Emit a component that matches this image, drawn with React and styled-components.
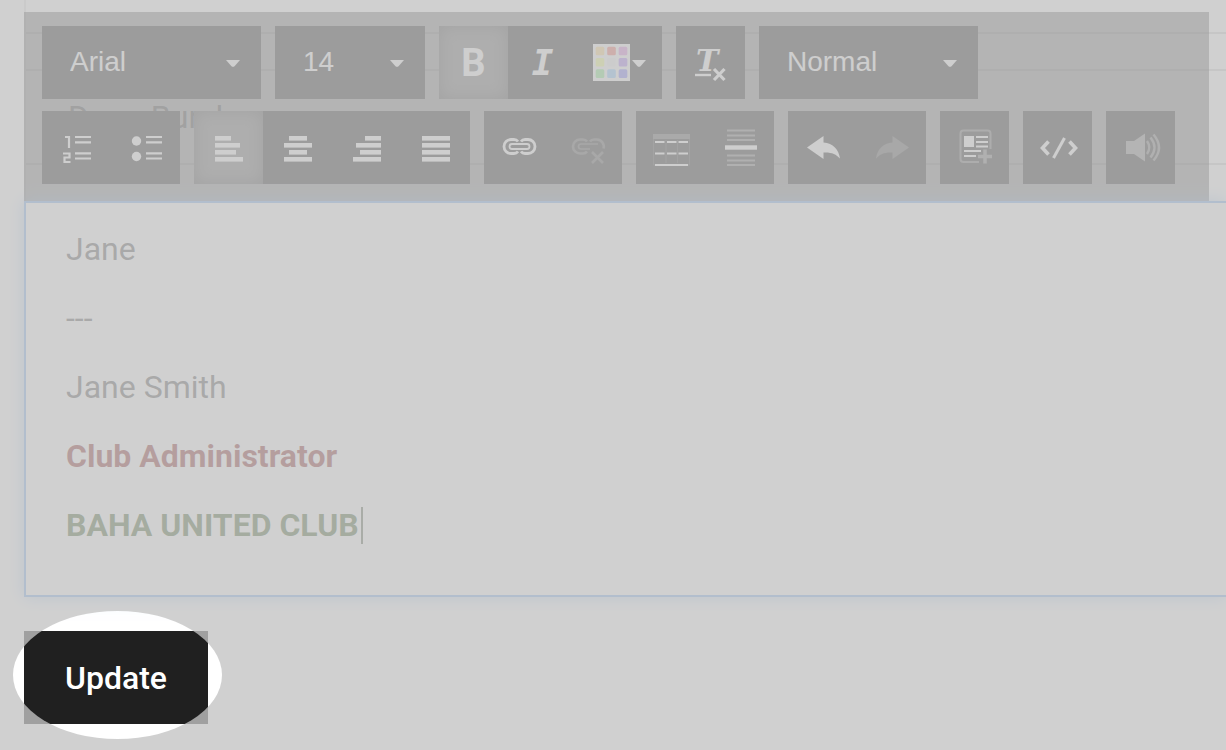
import React from 'react';
import styled, { createGlobalStyle } from 'styled-components';

const GlobalStyle = createGlobalStyle`
  * {
    box-sizing: border-box;
  }
  body {
    margin: 0;
    background: #fff;
    font-family: Roboto, "Liberation Sans", sans-serif;
  }
`;

const Page = styled.main`
  min-height: 100vh;
  padding: 0 0 24px 24px;
  overflow: hidden;
`;

const Compose = styled.section`
  position: relative;
`;

const Details = styled.div`
  height: 201px;
  border-left: 2px solid #e4e4e4;
`;

const DetailRow = styled.div`
  display: flex;
  align-items: center;
  height: ${(props) => props.$height}px;
  padding-left: 42px;
  border-bottom: 2px solid #d0d0d0;
  font-size: 32px;
  color: #4a4a4a;
`;

const Toolbar = styled.div`
  position: absolute;
  top: 12px;
  left: 0;
  right: 17px;
  display: flex;
  flex-direction: column;
  gap: 12px;
  padding: 14px 18px 17px;
  background: rgba(0, 0, 0, 0.5);
`;

const ToolRow = styled.div`
  display: flex;
  gap: 14px;
`;

const Group = styled.div`
  display: flex;
  background: #121212;
`;

const ToolButton = styled.button`
  display: flex;
  align-items: center;
  justify-content: center;
  width: ${(props) => (props.$wide ? 85 : 69)}px;
  height: 73px;
  padding: 0;
  border: 0;
  color: ${(props) => (props.disabled ? '#464646' : '#f4f4f4')};
  background: ${(props) => (props.$active ? '#626262' : 'transparent')};
  box-shadow: ${(props) => (props.$active ? 'inset 0 0 16px #303030' : 'none')};
`;

const Letter = styled.span`
  font: ${(props) => (props.$italic ? 'italic bold 36px "DejaVu Sans Mono", monospace' : 'bold 38px Roboto, sans-serif')};
  line-height: 40px;
`;

const Picker = styled.div`
  position: relative;
  width: ${(props) => props.$width}px;
  height: 73px;
  background: #121212;
`;

const Select = styled.select`
  appearance: none;
  width: 100%;
  height: 100%;
  padding: 0 48px 2px 28px;
  border: 0;
  border-radius: 0;
  background: transparent;
  color: #f4f4f4;
  font-family: "Liberation Sans", Arial, sans-serif;
  font-size: 28px;
`;

const PickerArrow = styled.span`
  position: absolute;
  top: 34px;
  right: 21px;
  display: flex;
  color: #f4f4f4;
  pointer-events: none;
`;

const Editor = styled.div`
  position: relative;
  height: 396px;
  padding: 28px 40px;
  border: 2px solid #74aaee;
  border-right: 0;
  background: #fff;
  box-shadow: 0 0 16px rgba(102, 165, 233, 0.6);
  outline: 0;
`;

const Line = styled.p`
  display: flex;
  align-items: center;
  margin: 0 0 32px;
  font-size: 32px;
  line-height: 37px;
  font-weight: ${(props) => (props.$bold ? 700 : 400)};
  color: ${(props) => props.$color || '#4a4a4a'};
`;

const Cursor = styled.span`
  width: 2px;
  height: 37px;
  margin-left: 2px;
  background: #4a5a42;
`;

const Actions = styled.div`
  position: relative;
  display: inline-block;
  margin-top: 34px;
`;

const UpdateButton = styled.button`
  display: block;
  height: 93px;
  padding: 0 41px;
  border: 0;
  background: #202020;
  color: #fff;
  font-family: Roboto, "Liberation Sans", sans-serif;
  font-size: 32px;
  font-weight: 500;
`;

// Dims everything but the area around the button
const Spotlight = styled.div`
  position: absolute;
  top: -20px;
  right: -14px;
  bottom: -15px;
  left: -11px;
  border-radius: 50%;
  box-shadow: 0 0 0 4000px rgba(195, 195, 195, 0.785);
  pointer-events: none;
`;

const Icon = ({ children, width = 69 }) => (
  <svg width={width} height="73" viewBox={`0 0 ${width} 73`} fill="none" stroke="currentColor" strokeWidth="2.2" aria-hidden="true">
    {children}
  </svg>
);

const Arrow = () => (
  <svg width="14" height="7" viewBox="0 0 14 7" fill="currentColor" aria-hidden="true">
    <path d="M0 0h14L8.5 6.2q-1.5 1-3 0z" />
  </svg>
);

const Bars = ({ bars }) => (
  <Icon>
    {bars.map(([x, width], i) => (
      <rect key={i} x={x} y={25 + i * 7} width={width} height="4.6" fill="currentColor" stroke="none" />
    ))}
  </Icon>
);

const swatches = ['#ffd57d', '#f16658', '#da7dda', '#f1ff7d', '#ececec', '#a274f1', '#7de87d', '#7dc3ff', '#7474fb'];

const ColorIcon = () => (
  <Icon width={85}>
    <rect x="16" y="18" width="37" height="37" fill="#f4f4f4" stroke="none" />
    {swatches.map((color, i) => (
      <rect key={color} x={18.7 + (i % 3) * 11.5} y={20.7 + Math.floor(i / 3) * 11.3} width="8.6" height="8.6" rx="1.5" fill={color} stroke="none" />
    ))}
    <path d="M55 34h14l-5.5 6.2q-1.5 1-3 0z" fill="currentColor" stroke="none" />
  </Icon>
);

const ClearIcon = () => (
  <Icon>
    <text x="20" y="45" fill="currentColor" stroke="none" fontFamily="DejaVu Serif, serif" fontSize="30" fontWeight="bold" fontStyle="italic">T</text>
    <path d="M19 49h16" strokeWidth="2.4" />
    <path d="M38 43l10.500 11M48.500 43L38 54" strokeWidth="3.2" />
  </Icon>
);

const NumberedIcon = () => (
  <Icon>
    <path d="M23 26h4v11M21 42.5h6.5v4h-5v4.5h6M33 26h16M33 31.3h16M33 42.3h16M33 47.5h16" />
  </Icon>
);

const BulletIcon = () => (
  <Icon>
    <circle cx="25.5" cy="30" r="4.7" fill="currentColor" stroke="none" />
    <circle cx="25.5" cy="45.5" r="4.7" fill="currentColor" stroke="none" />
    <path d="M35 26h16M35 31.3h16M35 42.3h16M35 47.5h16" />
  </Icon>
);

const LinkIcon = () => (
  <Icon>
    <path d="M34 30.5q-1.5-2-4-2h-3a7 7 0 0 0 0 14h3q2.5 0 4-2M37 30.5q1.5-2 4-2h3a7 7 0 0 1 0 14h-3q-2.500 0-4-2" strokeWidth="2.8" />
    <rect x="25.5" y="33" width="20" height="5" rx="2.5" strokeWidth="1.8" />
  </Icon>
);

const UnlinkIcon = () => (
  <Icon>
    <path d="M34 30.5q-1.5-2-4-2h-3a7 7 0 0 0 0 14h3q2.5 0 4-2M37 30.5q1.5-2 4-2h3a7 7 0 0 1 6.500 9" strokeWidth="2.6" />
    <path d="M45 33H28a2.500 2.500 0 0 0 0 5h9" strokeWidth="1.6" />
    <path d="M39 41l11 11M50 41L39 52" strokeWidth="2.6" />
  </Icon>
);

const TableIcon = () => (
  <Icon>
    <rect x="17" y="23" width="37" height="5" fill="#505050" stroke="none" />
    <path d="M17.5 28v26h36V28M30 29v23M41.5 29v23" stroke="#303030" strokeWidth="1" />
    <path d="M19 31h9.5M31 31h9.5M42.5 31H52M19 42.5h9.5M31 42.5h9.5M42.5 42.5H52M19 54h33" />
  </Icon>
);

const RuleIcon = () => (
  <Icon>
    <path d="M22 19.5h28M22 24.5h28M22 29h28M22 44.5h28M22 49.5h28M22 54h28" stroke="#6a6a6a" strokeWidth="2" />
    <path d="M20 36.5h32" strokeWidth="4.4" />
  </Icon>
);

const UndoIcon = ({ flip }) => (
  <Icon>
    <path
      d="M19 36.5L35.5 25v6.5C45 32 51 39 52 47.5C48 43 43 41 35.5 41.5V48z"
      fill="currentColor"
      stroke="none"
      transform={flip ? 'matrix(-1 0 0 1 71 0)' : undefined}
    />
  </Icon>
);

const NewsIcon = () => (
  <Icon>
    <path d="M39 51H23.5a3 3 0 0 1-3-3V22.5a3 3 0 0 1 3-3h24a3 3 0 0 1 3 3V38" stroke="#5c5c5c" strokeWidth="2" />
    <path d="M45 38.5v14M38 45.5h14" stroke="#6c6c6c" strokeWidth="3.5" />
    <rect x="24" y="25" width="10" height="11" fill="currentColor" stroke="none" />
    <path d="M36 26h12M36 31h12M36 35.5h12M24 40h17M24 45h12" strokeWidth="2" />
  </Icon>
);

const CodeIcon = () => (
  <Icon>
    <path d="M25.5 30.5l-6 6.500 6 6.500M46.5 30.5l6 6.500-6 6.500" strokeWidth="3.6" />
    <path d="M41.5 27L30.5 47" strokeWidth="3" />
  </Icon>
);

const SpeakerIcon = () => (
  <Icon>
    <path d="M20 30h8l11-7.5v28L28 43h-8z" fill="#7c7c7c" stroke="none" />
    <path d="M41 30q4.5 6.500 0 13M44.500 26.5q8 10 0 20M47.500 23.5q11 13 0 26" stroke="#6c6c6c" strokeWidth="2.4" />
  </Icon>
);

const Dropdown = ({ label, value, width }) => (
  <Picker $width={width}>
    <Select aria-label={label} defaultValue={value}>
      <option>{value}</option>
    </Select>
    <PickerArrow><Arrow /></PickerArrow>
  </Picker>
);

const App = () => {
  return (
    <Page>
      <GlobalStyle />
      <Compose>
        <Details>
          <DetailRow $height={34} />
          <DetailRow $height={37} />
          <DetailRow $height={94}>Doug Burch</DetailRow>
        </Details>
        <Toolbar role="toolbar" aria-label="Formatting">
          <ToolRow>
            <Dropdown label="Font" value="Arial" width={219} />
            <Dropdown label="Size" value="14" width={150} />
            <Group>
              <ToolButton $active aria-label="Bold"><Letter>B</Letter></ToolButton>
              <ToolButton aria-label="Italic"><Letter $italic>I</Letter></ToolButton>
              <ToolButton $wide aria-label="Text color"><ColorIcon /></ToolButton>
            </Group>
            <Group>
              <ToolButton aria-label="Clear formatting"><ClearIcon /></ToolButton>
            </Group>
            <Dropdown label="Format" value="Normal" width={219} />
          </ToolRow>
          <ToolRow>
            <Group>
              <ToolButton aria-label="Numbered list"><NumberedIcon /></ToolButton>
              <ToolButton aria-label="Bulleted list"><BulletIcon /></ToolButton>
            </Group>
            <Group>
              <ToolButton $active aria-label="Align left"><Bars bars={[[21, 16], [21, 25], [21, 21], [21, 28]]} /></ToolButton>
              <ToolButton aria-label="Center"><Bars bars={[[26, 18], [21, 28], [26, 18], [21, 28]]} /></ToolButton>
              <ToolButton aria-label="Align right"><Bars bars={[[33, 16], [24, 25], [28, 21], [21, 28]]} /></ToolButton>
              <ToolButton aria-label="Justify"><Bars bars={[[21, 28], [21, 28], [21, 28], [21, 28]]} /></ToolButton>
            </Group>
            <Group>
              <ToolButton aria-label="Link"><LinkIcon /></ToolButton>
              <ToolButton disabled aria-label="Remove link"><UnlinkIcon /></ToolButton>
            </Group>
            <Group>
              <ToolButton aria-label="Page break"><TableIcon /></ToolButton>
              <ToolButton aria-label="Horizontal line"><RuleIcon /></ToolButton>
            </Group>
            <Group>
              <ToolButton aria-label="Undo"><UndoIcon /></ToolButton>
              <ToolButton disabled aria-label="Redo"><UndoIcon flip /></ToolButton>
            </Group>
            <Group>
              <ToolButton aria-label="Insert template"><NewsIcon /></ToolButton>
            </Group>
            <Group>
              <ToolButton aria-label="Source"><CodeIcon /></ToolButton>
            </Group>
            <Group>
              <ToolButton aria-label="Read aloud"><SpeakerIcon /></ToolButton>
            </Group>
          </ToolRow>
        </Toolbar>
      </Compose>
      <Editor role="textbox" aria-label="Message" aria-multiline="true" tabIndex={0}>
        <Line>Jane</Line>
        <Line>---</Line>
        <Line>Jane Smith</Line>
        <Line $bold $color="#801818">Club Administrator</Line>
        <Line $bold $color="#385723">BAHA UNITED CLUB<Cursor /></Line>
      </Editor>
      <Actions>
        <UpdateButton type="button">Update</UpdateButton>
        <Spotlight />
      </Actions>
    </Page>
  );
};

export default App;
